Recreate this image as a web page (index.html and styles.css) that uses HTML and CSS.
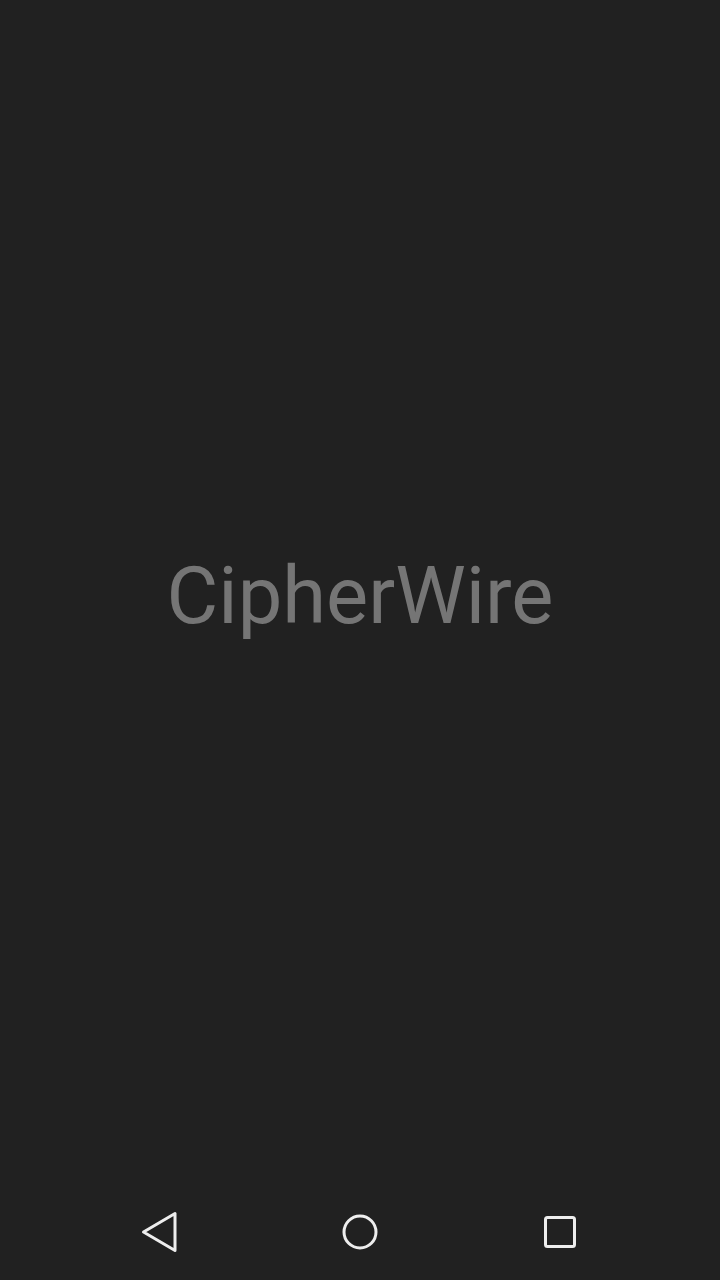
FILE: index.html
```html
<!DOCTYPE html>
<html>
<head>
<meta charset="utf-8">
<link rel="stylesheet" href="styles.css">
</head>
<body>
<div class="screen">
  <main class="splash">
    <h1 class="title">CipherWire</h1>
  </main>
  <nav class="navbar">
    <svg class="nav-icon" width="48" height="48" viewBox="0 0 48 48">
      <path d="M39 5.5 L39 42.5 L7.5 24 Z" fill="none" stroke="#eeeeee" stroke-width="3" stroke-linejoin="round"/>
    </svg>
    <svg class="nav-icon" width="48" height="48" viewBox="0 0 48 48">
      <circle cx="24" cy="24" r="16" fill="none" stroke="#eeeeee" stroke-width="3"/>
    </svg>
    <svg class="nav-icon" width="48" height="48" viewBox="0 0 48 48">
      <rect x="9.5" y="9.5" width="29" height="29" rx="2" fill="none" stroke="#eeeeee" stroke-width="3"/>
    </svg>
  </nav>
</div>
</body>
</html>
```
FILE: styles.css
```css
html, body {
  margin: 0;
  padding: 0;
  background: #212121;
}
.screen {
  width: 720px;
  height: 1280px;
  display: flex;
  flex-direction: column;
  background: #212121;
}
.splash {
  flex: 1;
  display: flex;
  align-items: center;
  justify-content: center;
  padding-top: 8px;
}
.title {
  margin: 0;
  font-family: Roboto, "Noto Sans", sans-serif;
  font-weight: 400;
  font-size: 79.5px;
  line-height: 1;
  color: #757575;
}
.navbar {
  height: 96px;
  display: grid;
  grid-template-columns: 200px 200px 200px;
  justify-content: center;
  align-items: center;
}
.nav-icon {
  justify-self: center;
  display: block;
}
```
